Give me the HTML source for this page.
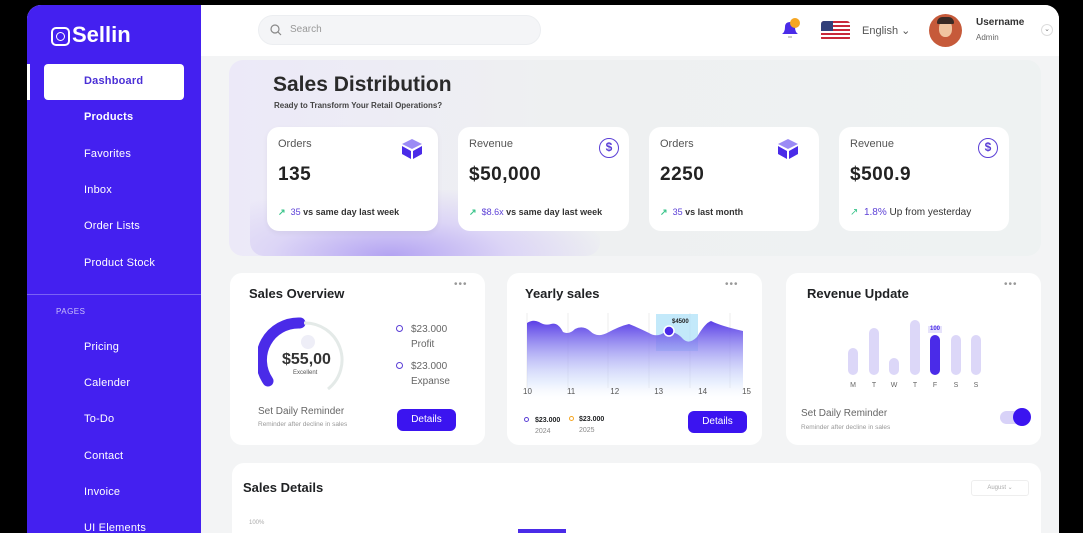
<!DOCTYPE html>
<html><head><meta charset="utf-8"><style>
*{margin:0;padding:0;box-sizing:border-box}
html,body{width:1083px;height:533px;overflow:hidden}
body{background:#000;font-family:"Liberation Sans",sans-serif;position:relative;color:#202224}
.a{position:absolute}
#panel{left:27px;top:5px;width:1032px;height:528px;background:#f3f4f5;border-radius:14px 14px 0 0;overflow:hidden}
#side{left:27px;top:5px;width:174px;height:528px;background:#4420f0;border-radius:14px 0 0 0;overflow:hidden}
.nav{position:absolute;left:84px;color:#fff;font-size:11px;font-weight:bold;letter-spacing:.2px}
#top{left:201px;top:5px;width:858px;height:51px;background:#fff;border-radius:0 14px 0 0}
.card{position:absolute;background:#fff;border-radius:12px}
.lbl{position:absolute;left:11px;top:11px;font-size:11px;color:#555}
.val{position:absolute;left:11px;top:37px;font-size:19px;font-weight:bold;color:#222;letter-spacing:.5px}
.foot{position:absolute;left:11px;top:80px;font-size:9px;font-weight:bold;color:#333;white-space:nowrap}
.foot b{color:#5b3fd6;font-weight:normal}
.h{position:absolute;font-size:13px;font-weight:bold;color:#202224}
.dots{position:absolute;font-size:10px;color:#999;letter-spacing:1px}
.btn{position:absolute;background:#3b14f0;color:#fff;font-size:10px;border-radius:6px;text-align:center}
.sm{font-size:7px;color:#999}
.d{position:absolute;top:109px;font-size:7px;color:#666;width:10px;text-align:center}
</style></head><body>
<div id="panel" class="a"></div>
<div class="a" style="left:229px;top:60px;width:812px;height:196px;border-radius:14px;background:linear-gradient(90deg,#ece9f8 0%,#eef0f1 40%,#eef2f2 100%)"></div>
<div class="a" style="left:250px;top:190px;width:350px;height:66px;border-radius:0 0 14px 14px;background:radial-gradient(ellipse at 40% 100%,#b3a3f2 0%,#dcd5f6 40%,rgba(238,240,241,0) 75%)"></div>
<div id="side" class="a"></div>
<div id="top" class="a"></div>
<div class="a" style="left:51px;top:27px;width:19px;height:19px;border:2px solid #fff;border-radius:5px"></div>
<div class="a" style="left:56px;top:32px;width:9px;height:9px;border:1.5px solid #fff;border-radius:50%"></div>
<div class="a" style="left:72px;top:22px;color:#fff;font-size:22px;font-weight:bold">Sellin</div>
<div class="a" style="left:27px;top:64px;width:3px;height:36px;background:#fff"></div>
<div class="a" style="left:44px;top:64px;width:140px;height:36px;background:#fff;border-radius:4px"></div>
<div class="nav" style="top:75px;color:#4a2fd6">Dashboard</div>
<div class="nav" style="top:111px">Products</div>
<div class="nav" style="top:148px;font-weight:normal">Favorites</div>
<div class="nav" style="top:184px;font-weight:normal">Inbox</div>
<div class="nav" style="top:220px;font-weight:normal">Order Lists</div>
<div class="nav" style="top:257px;font-weight:normal">Product Stock</div>
<div class="a" style="left:27px;top:294px;width:174px;height:1px;background:#7a62f4"></div>
<div class="a" style="left:56px;top:307px;color:#c9bffb;font-size:8px;letter-spacing:.5px">PAGES</div>
<div class="nav" style="top:341px;font-weight:normal">Pricing</div>
<div class="nav" style="top:377px;font-weight:normal">Calender</div>
<div class="nav" style="top:413px;font-weight:normal">To-Do</div>
<div class="nav" style="top:450px;font-weight:normal">Contact</div>
<div class="nav" style="top:486px;font-weight:normal">Invoice</div>
<div class="nav" style="top:522px;font-weight:normal;height:11px;overflow:hidden">UI Elements</div>
<div class="a" style="left:258px;top:15px;width:283px;height:30px;background:#f4f5f7;border:1px solid #eceef1;border-radius:15px"></div>
<svg class="a" style="left:270px;top:24px" width="12" height="12"><circle cx="5" cy="5" r="4" fill="none" stroke="#888" stroke-width="1.2"/><path d="M8 8l3 3" stroke="#888" stroke-width="1.2"/></svg>
<div class="a" style="left:290px;top:24px;font-size:10px;color:#999">Search</div>
<svg class="a" style="left:779px;top:18px" width="24" height="22"><path d="M3 16 Q6 14 6 9 Q6 4 11 4 Q16 4 16 9 Q16 14 19 16Z" fill="#4a2be8"/><rect x="9" y="18" width="4" height="2" fill="#ccc"/><circle cx="16" cy="5" r="5" fill="#f5a623"/></svg>
<div class="a" style="left:821px;top:21px;width:29px;height:20px;border-radius:3px;background:repeating-linear-gradient(#c8283a 0 2px,#fff 2px 4px)"></div>
<div class="a" style="left:821px;top:21px;width:12px;height:10px;background:#33407a;border-radius:3px 0 0 0"></div>
<div class="a" style="left:862px;top:24px;font-size:11px;color:#555">English &#8964;</div>
<div class="a" style="left:929px;top:14px;width:33px;height:33px;border-radius:50%;background:#c65a3a;overflow:hidden"><div class="a" style="left:10px;top:6px;width:13px;height:17px;border-radius:45%;background:#f0c4a0"></div><div class="a" style="left:8px;top:3px;width:17px;height:7px;border-radius:8px 8px 2px 2px;background:#3a2a25"></div></div>
<div class="a" style="left:976px;top:17px;font-size:10px;font-weight:bold;color:#333">Username</div>
<div class="a" style="left:976px;top:33px;font-size:8px;color:#666">Admin</div>
<div class="a" style="left:1041px;top:24px;width:12px;height:12px;border-radius:50%;border:1px solid #ddd;font-size:7px;color:#777;text-align:center;line-height:10px">&#8964;</div>
<div class="a" style="left:273px;top:73px;font-size:21px;font-weight:bold;color:#2a2a2a">Sales Distribution</div>
<div class="a" style="left:274px;top:101px;font-size:8px;font-weight:bold;color:#444">Ready to Transform Your Retail Operations?</div>
<div class="card" style="left:267px;top:127px;width:171px;height:104px;box-shadow:0 2px 6px rgba(0,0,0,.05)"><div class="lbl">Orders</div><svg class="a" style="left:134px;top:11px" width="22" height="22"><path d="M11 1 L21 6 L11 11 L1 6Z" fill="#9b8bf5"/><path d="M1 8 L10 13 V21 L1 16Z M21 8 L12 13 V21 L21 16Z" fill="#4a2be8"/></svg><div class="val">135</div><div class="foot"><span style="color:#3ac48a">&#8599;</span>&nbsp; <b>35</b> vs same day last week</div></div>
<div class="card" style="left:458px;top:127px;width:171px;height:104px"><div class="lbl">Revenue</div><div class="a" style="left:141px;top:11px;width:20px;height:20px;border:1.6px solid #5b3fd6;border-radius:50%;color:#5b3fd6;font-size:12px;font-weight:bold;text-align:center;line-height:17px">$</div><div class="val">$50,000</div><div class="foot"><span style="color:#3ac48a">&#8599;</span>&nbsp; <b>$8.6x</b> vs same day last week</div></div>
<div class="card" style="left:649px;top:127px;width:170px;height:104px"><div class="lbl">Orders</div><svg class="a" style="left:128px;top:11px" width="22" height="22"><path d="M11 1 L21 6 L11 11 L1 6Z" fill="#9b8bf5"/><path d="M1 8 L10 13 V21 L1 16Z M21 8 L12 13 V21 L21 16Z" fill="#4a2be8"/></svg><div class="val">2250</div><div class="foot"><span style="color:#3ac48a">&#8599;</span>&nbsp; <b>35</b> vs last month</div></div>
<div class="card" style="left:839px;top:127px;width:170px;height:104px"><div class="lbl">Revenue</div><div class="a" style="left:139px;top:11px;width:20px;height:20px;border:1.6px solid #5b3fd6;border-radius:50%;color:#5b3fd6;font-size:12px;font-weight:bold;text-align:center;line-height:17px">$</div><div class="val">$500.9</div><div class="foot" style="font-weight:normal;font-size:10px"><span style="color:#3ac48a">&#8599;</span>&nbsp; <b>1.8%</b> Up from yesterday</div></div>
<div class="card" style="left:230px;top:273px;width:255px;height:172px">
<div class="h" style="left:19px;top:13px">Sales Overview</div><div class="dots" style="left:224px;top:6px">•••</div>
<svg class="a" style="left:28px;top:42px" width="90" height="90"><path d="M10 66 A37 37 0 0 1 42 8" fill="none" stroke="#4a2be8" stroke-width="11" stroke-linecap="round"/><path d="M46 8 A37 37 0 0 1 70 74" fill="none" stroke="#e4eae8" stroke-width="3"/><circle cx="50" cy="27" r="7" fill="#eeeef7"/></svg>
<div class="a" style="left:52px;top:78px;font-size:16px;font-weight:bold;color:#333">$55,00</div>
<div class="a" style="left:63px;top:97px;font-size:6px;color:#555">Excellent</div>
<div class="a" style="left:166px;top:52px;width:7px;height:7px;border:1.5px solid #5b3fd6;border-radius:50%"></div>
<div class="a" style="left:181px;top:49px;font-size:10px;color:#666;line-height:15px">$23.000<br>Profit</div>
<div class="a" style="left:166px;top:89px;width:7px;height:7px;border:1.5px solid #5b3fd6;border-radius:50%"></div>
<div class="a" style="left:181px;top:86px;font-size:10px;color:#666;line-height:15px">$23.000<br>Expanse</div>
<div class="a" style="left:28px;top:133px;font-size:10px;color:#666">Set Daily Reminder</div>
<div class="a sm" style="left:28px;top:148px;font-size:6.5px">Reminder after decline in sales</div>
<div class="btn" style="left:167px;top:136px;width:59px;height:22px;line-height:22px">Details</div></div>
<div class="card" style="left:507px;top:273px;width:255px;height:172px">
<div class="h" style="left:18px;top:13px">Yearly sales</div><div class="dots" style="left:218px;top:6px">•••</div>
<svg class="a" style="left:18px;top:40px" width="222" height="90"><defs><linearGradient id="g" x1="0" y1="0" x2="0" y2="1"><stop offset="0" stop-color="#5a3de6"/><stop offset=".75" stop-color="#c7d8fb" stop-opacity=".4"/><stop offset="1" stop-color="#fff" stop-opacity="0"/></linearGradient></defs>
<g stroke="#eee" stroke-width="1"><line x1="2" y1="0" x2="2" y2="75"/><line x1="43" y1="0" x2="43" y2="75"/><line x1="83" y1="0" x2="83" y2="75"/><line x1="124" y1="0" x2="124" y2="75"/><line x1="165" y1="0" x2="165" y2="75"/><line x1="205" y1="0" x2="205" y2="75"/></g>
<rect x="131" y="1" width="42" height="37" fill="#a9e0f8" opacity=".7"/>
<path d="M2 10 Q8 6 14 9 Q20 13 26 11 Q33 9 38 19 Q44 22 50 16 Q58 12 65 18 Q72 25 82 20 Q95 13 104 11 Q114 15 124 20 Q132 25 140 19 Q150 17 158 26 Q164 32 172 24 Q180 10 186 8 Q196 13 218 18 L218 90 L2 90Z" fill="url(#g)"/>
<circle cx="144" cy="18" r="5" fill="#4a2be8" stroke="#fff" stroke-width="1.5"/><text x="147" y="10" font-size="6" font-weight="bold" fill="#222" font-family="Liberation Sans">$4500</text></svg>
<div class="a" style="left:16px;top:114px;font-size:8px;color:#555;width:228px;display:flex;justify-content:space-between"><span>10</span><span>11</span><span>12</span><span>13</span><span>14</span><span>15</span></div>
<div class="a" style="left:17px;top:144px;width:5px;height:5px;border:1px solid #5b3fd6;border-radius:50%"></div>
<div class="a" style="left:28px;top:142px;font-size:7px;font-weight:bold;line-height:11px">$23.000<br><span style="font-weight:normal;color:#888">2024</span></div>
<div class="a" style="left:62px;top:143px;width:5px;height:5px;border:1px solid #f5a623;border-radius:50%"></div>
<div class="a" style="left:72px;top:141px;font-size:7px;font-weight:bold;line-height:11px">$23.000<br><span style="font-weight:normal;color:#888">2025</span></div>
<div class="btn" style="left:181px;top:138px;width:59px;height:22px;line-height:22px">Details</div></div>
<div class="card" style="left:786px;top:273px;width:255px;height:172px">
<div class="h" style="left:21px;top:13px">Revenue Update</div><div class="dots" style="left:218px;top:6px">•••</div>
<div class="a" style="left:62px;top:75px;width:10px;height:27px;border-radius:5px;background:#dcd7f8"></div>
<div class="a" style="left:83px;top:55px;width:10px;height:47px;border-radius:5px;background:#dcd7f8"></div>
<div class="a" style="left:103px;top:85px;width:10px;height:17px;border-radius:5px;background:#dcd7f8"></div>
<div class="a" style="left:124px;top:47px;width:10px;height:55px;border-radius:5px;background:#dcd7f8"></div>
<div class="a" style="left:144px;top:62px;width:10px;height:40px;border-radius:5px;background:#4a2be8"></div>
<div class="a" style="left:142px;top:53px;width:14px;height:7px;background:#e6e2fb;font-size:6px;color:#4a2be8;font-weight:bold;text-align:center;line-height:7px">100</div>
<div class="a" style="left:165px;top:62px;width:10px;height:40px;border-radius:5px;background:#dcd7f8"></div>
<div class="a" style="left:185px;top:62px;width:10px;height:40px;border-radius:5px;background:#dcd7f8"></div>
<div class="d" style="left:62px">M</div><div class="d" style="left:83px">T</div><div class="d" style="left:103px">W</div><div class="d" style="left:124px">T</div><div class="d" style="left:144px">F</div><div class="d" style="left:165px">S</div><div class="d" style="left:185px">S</div>
<div class="a" style="left:15px;top:135px;font-size:10px;color:#666">Set Daily Reminder</div>
<div class="a sm" style="left:15px;top:151px;font-size:6.5px">Reminder after decline in sales</div>
<div class="a" style="left:214px;top:138px;width:30px;height:13px;border-radius:7px;background:#d8d2f8"></div>
<div class="a" style="left:227px;top:135px;width:18px;height:18px;border-radius:50%;background:#3b14f0"></div></div>
<div class="card" style="left:232px;top:463px;width:809px;height:70px;border-radius:12px 12px 0 0;overflow:hidden">
<div class="h" style="left:11px;top:17px">Sales Details</div>
<div class="a" style="left:739px;top:17px;width:58px;height:16px;border:1px solid #eee;border-radius:3px;font-size:6px;color:#aaa;text-align:center;line-height:14px">August &#8964;</div>
<div class="a" style="left:17px;top:57px;font-size:6px;color:#aaa">100%</div>
<div class="a" style="left:286px;top:66px;width:48px;height:4px;background:#4a2be8"></div></div>
</body></html>
